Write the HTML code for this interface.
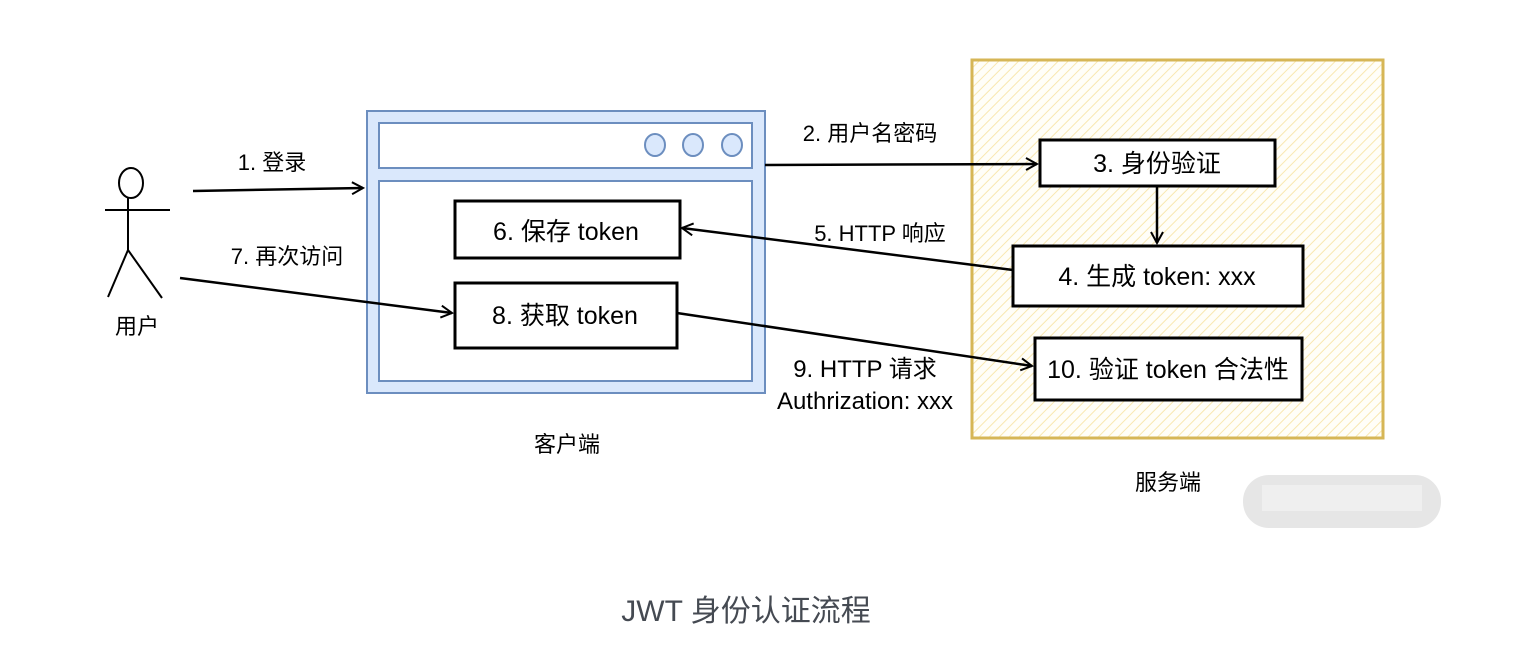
<!DOCTYPE html>
<html><head><meta charset="utf-8"><style>
html,body{margin:0;padding:0;background:#fff;width:1528px;height:648px;overflow:hidden}
svg text{font-family:"Liberation Sans","Noto Sans CJK SC",sans-serif;fill:#000}
</style></head><body>
<svg width="1528" height="648" viewBox="0 0 1528 648" xmlns="http://www.w3.org/2000/svg">
<defs>
<pattern id="h" width="7" height="7" patternUnits="userSpaceOnUse" patternTransform="rotate(45)">
<rect width="7" height="7" fill="#fffef8"/>
<line x1="0" y1="0" x2="0" y2="7" stroke="#f8e7b0" stroke-width="2"/>
</pattern>
<marker id="a" markerWidth="14" markerHeight="14" refX="12" refY="7" orient="auto" markerUnits="userSpaceOnUse">
<path d="M1,1 L12,7 L1,13" fill="none" stroke="#000" stroke-width="2"/>
</marker>
</defs>
<rect x="972" y="60" width="411" height="378" fill="url(#h)" stroke="#d6b656" stroke-width="3"/>
<rect x="367" y="111" width="398" height="282" fill="#dae8fc" stroke="#6c8ebf" stroke-width="2"/>
<rect x="379" y="123" width="373" height="45" fill="#fff" stroke="#6c8ebf" stroke-width="2"/>
<rect x="379" y="181" width="373" height="200" fill="#fff" stroke="#6c8ebf" stroke-width="2"/>
<ellipse cx="655" cy="145" rx="10" ry="11" fill="#dae8fc" stroke="#6c8ebf" stroke-width="2"/>
<ellipse cx="693" cy="145" rx="10" ry="11" fill="#dae8fc" stroke="#6c8ebf" stroke-width="2"/>
<ellipse cx="732" cy="145" rx="10" ry="11" fill="#dae8fc" stroke="#6c8ebf" stroke-width="2"/>
<g fill="#fff" stroke="#000" stroke-width="3">
<rect x="455" y="201" width="225" height="57"/>
<rect x="455" y="283" width="222" height="65"/>
<rect x="1040" y="140" width="235" height="46"/>
<rect x="1013" y="246" width="290" height="60"/>
<rect x="1035" y="338" width="267" height="62"/>
</g>
<g fill="none" stroke="#000" stroke-width="2">
<ellipse cx="131" cy="183" rx="12" ry="15"/>
<path d="M128,198 L128,250 M105,210 L170,210 M128,250 L108,297 M128,250 L162,298"/>
</g>
<g fill="none" stroke="#000" stroke-width="2.5" marker-end="url(#a)">
<path d="M193,191 L363,188"/>
<path d="M765,165 L1037,164"/>
<path d="M1157,186 L1157,243"/>
<path d="M1013,270 L682,228"/>
<path d="M180,278 L452,313"/>
<path d="M677,313 L1032,366"/>
</g>
<g font-size="25" text-anchor="middle">
<text x="566" y="240">6. 保存 token</text>
<text x="565" y="324">8. 获取 token</text>
<text x="1157" y="172">3. 身份验证</text>
<text x="1157" y="285">4. 生成 token: xxx</text>
<text x="1168" y="378">10. 验证 token 合法性</text>
</g>
<g font-size="22" text-anchor="middle">
<text x="272" y="170">1. 登录</text>
<text x="870" y="141">2. 用户名密码</text>
<text x="880" y="241">5. HTTP 响应</text>
<text x="287" y="264">7. 再次访问</text>
<text x="137" y="334">用户</text>
<text x="567" y="452">客户端</text>
<text x="1168" y="490">服务端</text>
</g>
<g font-size="24" text-anchor="middle">
<text x="865" y="377">9. HTTP 请求</text>
<text x="865" y="409">Authrization: xxx</text>
</g>
<rect x="1243" y="475" width="198" height="53" rx="26" fill="#e6e6e6"/>
<rect x="1262" y="485" width="160" height="26" fill="#efefef"/>
<text x="746" y="621" font-size="30" text-anchor="middle" style="fill:#454a52">JWT 身份认证流程</text>
</svg>
</body></html>
